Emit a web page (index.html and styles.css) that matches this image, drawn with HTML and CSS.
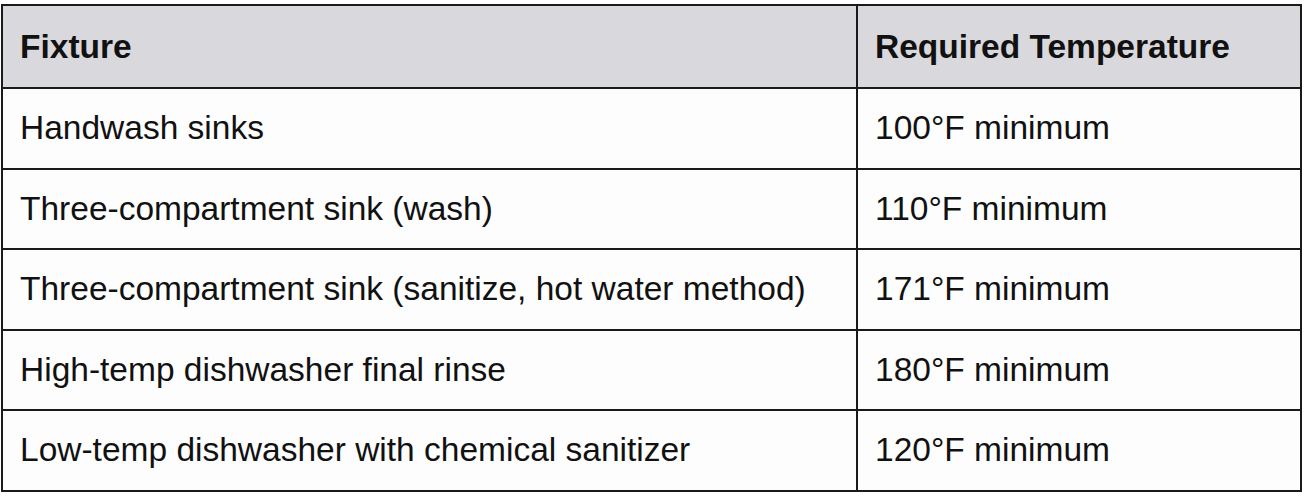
FILE: index.html
```html
<!DOCTYPE html>
<html>
<head>
<meta charset="utf-8">
<link rel="stylesheet" href="styles.css">
</head>
<body>
<div class="wrap">
<table class="temps">
  <colgroup><col class="col1"><col class="col2"></colgroup>
  <thead>
    <tr><th>Fixture</th><th>Required Temperature</th></tr>
  </thead>
  <tbody>
    <tr><td>Handwash sinks</td><td>100°F minimum</td></tr>
    <tr><td>Three-compartment sink (wash)</td><td>110°F minimum</td></tr>
    <tr><td>Three-compartment sink (sanitize, hot water method)</td><td>171°F minimum</td></tr>
    <tr><td>High-temp dishwasher final rinse</td><td>180°F minimum</td></tr>
    <tr><td>Low-temp dishwasher with chemical sanitizer</td><td>120°F minimum</td></tr>
  </tbody>
</table>
</div>
</body>
</html>
```
FILE: styles.css
```css
html, body {
  margin: 0;
  padding: 0;
  background: #ffffff;
}
.wrap {
  padding: 4px 0 0 1px;
}
.temps {
  border-collapse: collapse;
  width: 1301px;
  font-family: "Liberation Sans", Arial, sans-serif;
  font-size: 33.5px;
  color: #111111;
  table-layout: fixed;
}
.col1 { width: 855px; }
.temps th, .temps td {
  border: 2px solid #1a1a1a;
  padding: 0 0 0 17px;
  text-align: left;
  vertical-align: middle;
  white-space: nowrap;
}
.temps th {
  background: #d9d8dc;
  font-weight: bold;
  height: 81px;
}
.temps td {
  background: #fdfdfe;
  height: 78.5px;
}
```
